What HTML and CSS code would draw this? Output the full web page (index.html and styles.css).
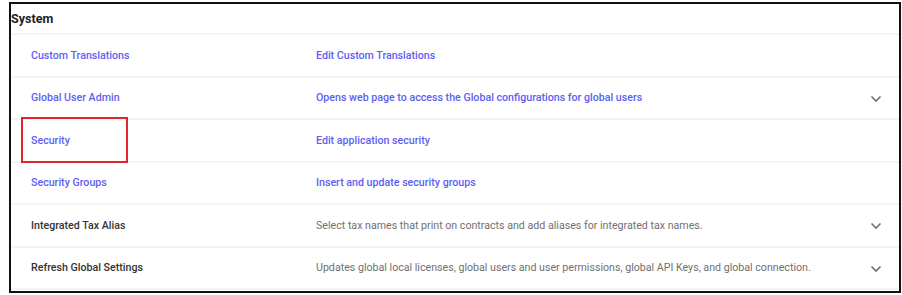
FILE: index.html
```html
<!DOCTYPE html>
<html>
<head>
  <meta charset="UTF-8">
  <title>System</title>
  <link rel="stylesheet" href="styles.css">
</head>
<body>
  <div class="frame">
    <div class="section-title">System</div>
    <div class="rows">
      <div class="row">
        <div class="name link">Custom Translations</div>
        <div class="desc link">Edit Custom Translations</div>
        <div class="toggle"></div>
      </div>
      <div class="row">
        <div class="name link">Global User Admin</div>
        <div class="desc link">Opens web page to access the Global configurations for global users</div>
        <div class="toggle">
          <svg width="12" height="8" viewBox="0 0 12 8"><path d="M1.5 1.5 L6 6 L10.5 1.5" fill="none" stroke="#6f6f6f" stroke-width="1.6"/></svg>
        </div>
      </div>
      <div class="row">
        <div class="name link highlighted">Security<span class="mark"></span></div>
        <div class="desc link">Edit application security</div>
        <div class="toggle"></div>
      </div>
      <div class="row">
        <div class="name link">Security Groups</div>
        <div class="desc link">Insert and update security groups</div>
        <div class="toggle"></div>
      </div>
      <div class="row">
        <div class="name">Integrated Tax Alias</div>
        <div class="desc">Select tax names that print on contracts and add aliases for integrated tax names.</div>
        <div class="toggle">
          <svg width="12" height="8" viewBox="0 0 12 8"><path d="M1.5 1.5 L6 6 L10.5 1.5" fill="none" stroke="#6f6f6f" stroke-width="1.6"/></svg>
        </div>
      </div>
      <div class="row">
        <div class="name">Refresh Global Settings</div>
        <div class="desc">Updates global local licenses, global users and user permissions, global API Keys, and global connection.</div>
        <div class="toggle">
          <svg width="12" height="8" viewBox="0 0 12 8"><path d="M1.5 1.5 L6 6 L10.5 1.5" fill="none" stroke="#6f6f6f" stroke-width="1.6"/></svg>
        </div>
      </div>
    </div>
  </div>
</body>
</html>
```

FILE: styles.css
```css
body {
  margin: 0;
  background: #fff;
  font-family: Roboto, "Liberation Sans", Arial, sans-serif;
}
.frame {
  margin: 2px 1px 0 9px;
  height: 287px;
  border: 2px solid #111;
  overflow: hidden;
}
.section-title {
  height: 29px;
  line-height: 29px;
  font-size: 12.5px;
  font-weight: 700;
  color: #222;
  border-bottom: 2px solid #f4f4f4;
}
.row {
  display: grid;
  grid-template-columns: 305px 1fr 40px;
  align-items: center;
  height: 40.5px;
  border-bottom: 2px solid #f4f4f4;
  font-size: 10.65px;
}
.name {
  padding-left: 20px;
  font-weight: 500;
  color: #333;
}
.desc {
  color: #707070;
}
.link {
  color: #5e5ef2;
  font-weight: 500;
}
.toggle {
  display: flex;
  align-items: center;
  padding-left: 11px;
  padding-top: 2px;
}
.highlighted {
  position: relative;
}
.mark {
  position: absolute;
  left: 10px;
  top: -17px;
  width: 103px;
  height: 42px;
  border: 2px solid #e0262c;
}
```
